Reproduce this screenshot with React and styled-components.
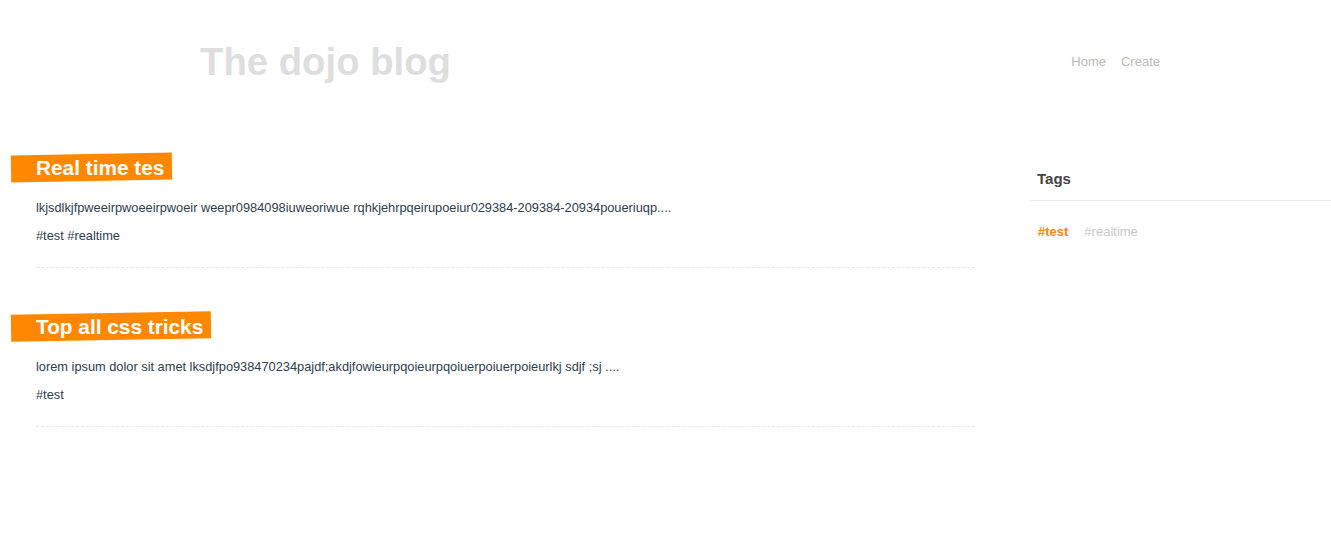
import React from "react";
import styled, { createGlobalStyle } from "styled-components";

const GlobalStyle = createGlobalStyle`
  body {
    margin: 0;
    font-family: "Liberation Sans", Arial, sans-serif;
    background: #fff;
  }
`;

const Header = styled.header`
  display: flex;
  justify-content: space-between;
  align-items: flex-start;
  height: 120px;
  box-sizing: border-box;
  padding: 39px 171px 0 200px;
`;

const Logo = styled.h1`
  margin: 0;
  font-size: 38.3px;
  font-weight: bold;
  color: #dedede;
  line-height: 45px;
`;

const Nav = styled.nav`
  display: flex;
  gap: 15px;
  padding-top: 15px;
`;

const NavLink = styled.a`
  font-size: 13px;
  color: #b8b8b8;
  text-decoration: none;
`;

const Main = styled.main`
  display: flex;
  align-items: flex-start;
  padding-top: 34px;
`;

const PostList = styled.section`
  width: 939px;
  padding-left: 36px;
  margin-right: 55px;
`;

const Post = styled.article`
  margin-bottom: 45px;
`;

const PostTitle = styled.h2`
  position: relative;
  display: inline-block;
  margin: 0 0 0 -25px;
  padding: 0 8px 0 25px;
  font-size: 20.8px;
  line-height: 27px;
  font-weight: bold;
  color: #fff;

  &::before {
    content: "";
    position: absolute;
    inset: 0;
    background: #ff8800;
    transform: rotate(-1deg);
    z-index: -1;
  }
`;

const Excerpt = styled.p`
  margin: 19px 0 0;
  font-size: 12.8px;
  line-height: 15px;
  color: #2c3e50;
`;

const PostTags = styled.p`
  margin: 13px 0 0;
  font-size: 12.8px;
  line-height: 15px;
  color: #2c3e50;
`;

const Divider = styled.hr`
  margin: 24px 0 0;
  border: none;
  border-top: 1px dashed #e6e6e6;
`;

const Sidebar = styled.aside`
  width: 301px;
`;

const SidebarTitle = styled.h3`
  margin: 0;
  padding: 16px 7px 13px;
  font-size: 15px;
  line-height: 17px;
  font-weight: bold;
  color: #444;
  border-bottom: 1px solid #ececec;
`;

const TagList = styled.div`
  display: flex;
  gap: 16px;
  padding: 24px 8px 0;
`;

const Tag = styled.a`
  font-size: 13px;
  line-height: 14px;
  text-decoration: none;
  font-weight: ${(p) => (p.active ? "bold" : "normal")};
  color: ${(p) => (p.active ? "#ff8800" : "#c8c8c8")};
`;

const posts = [
  {
    title: "Real time tes",
    excerpt:
      "lkjsdlkjfpweeirpwoeeirpwoeir weepr0984098iuweoriwue rqhkjehrpqeirupoeiur029384-209384-20934poueriuqp....",
    tags: "#test #realtime",
  },
  {
    title: "Top all css tricks",
    excerpt:
      "lorem ipsum dolor sit amet lksdjfpo938470234pajdf;akdjfowieurpqoieurpqoiuerpoiuerpoieurlkj sdjf ;sj ....",
    tags: "#test",
  },
];

export default function App() {
  return (
    <>
      <GlobalStyle />
      <Header>
        <Logo>The dojo blog</Logo>
        <Nav>
          <NavLink href="#">Home</NavLink>
          <NavLink href="#">Create</NavLink>
        </Nav>
      </Header>
      <Main>
        <PostList>
          {posts.map((post) => (
            <Post key={post.title}>
              <PostTitle>{post.title}</PostTitle>
              <Excerpt>{post.excerpt}</Excerpt>
              <PostTags>{post.tags}</PostTags>
              <Divider />
            </Post>
          ))}
        </PostList>
        <Sidebar>
          <SidebarTitle>Tags</SidebarTitle>
          <TagList>
            <Tag href="#" active>
              #test
            </Tag>
            <Tag href="#">#realtime</Tag>
          </TagList>
        </Sidebar>
      </Main>
    </>
  );
}
